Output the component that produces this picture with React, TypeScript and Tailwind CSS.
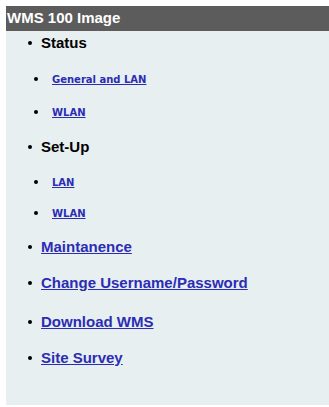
import React from 'react';

const sub = "font-['DejaVu_Sans',sans-serif] text-[10px] font-bold text-[#2c2cb4] underline";
const big = "font-['Liberation_Sans',Arial,sans-serif] text-[15px] font-bold";

const Dot = () => <span className="w-[4px] h-[4px] bg-black rounded-full inline-block shrink-0" />;

const Heading: React.FC<{ label: string; link?: boolean; mt: string }> = ({ label, link, mt }) => (
  <li className={`flex items-center h-[20px] pl-[22px] ${mt}`}>
    <Dot />
    <a href="#" className={`${big} ml-[9px] ${link ? 'text-[#2c2cb4] underline' : 'text-black'}`}>
      {label}
    </a>
  </li>
);

const SubItem: React.FC<{ label: string; mt: string }> = ({ label, mt }) => (
  <li className={`flex items-center h-[20px] pl-[28px] ${mt}`}>
    <Dot />
    <a href="#" className={`${sub} ml-[14px]`}>{label}</a>
  </li>
);

export default function App() {
  return (
    <div className="w-[329px] h-[407px] bg-white pt-[6px] pl-[6px]">
      <div className="h-[25px] bg-[#5c5c5c] flex items-center pl-[1px]">
        <span className="font-['Liberation_Sans',Arial,sans-serif] text-[15px] font-bold text-white">
          WMS 100 Image
        </span>
      </div>
      <div className="h-[374px] bg-[#e7eff1]">
        <ul className="flex flex-col">
          <Heading label="Status" mt="mt-[2px]" />
          <SubItem label="General and LAN" mt="mt-[16px]" />
          <SubItem label="WLAN" mt="mt-[13px]" />
          <Heading label="Set-Up" mt="mt-[15px]" />
          <SubItem label="LAN" mt="mt-[15px]" />
          <SubItem label="WLAN" mt="mt-[11px]" />
          <Heading label="Maintanence" link mt="mt-[14px]" />
          <Heading label="Change Username/Password" link mt="mt-[16px]" />
          <Heading label="Download WMS" link mt="mt-[19px]" />
          <Heading label="Site Survey" link mt="mt-[16px]" />
        </ul>
      </div>
    </div>
  );
}
